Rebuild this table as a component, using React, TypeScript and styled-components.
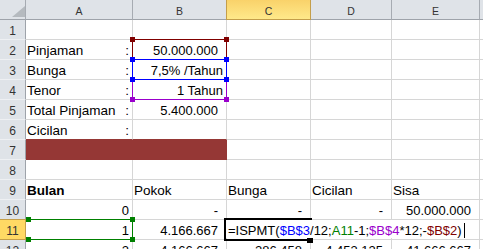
import React from 'react'
import styled, { createGlobalStyle, css } from 'styled-components'

const HEADER_BG = '#dfe3e8'
const HEAD_LINE = '#a6abb2'
const GRID = '#d6d6d6'
const GOLD = '#c49e4a'
const MAROON = '#953735'

const REF_RED = '#800000'
const REF_BLUE = '#0000ff'
const REF_PURPLE = '#9900cc'
const REF_GREEN = '#008000'

const GlobalStyle = createGlobalStyle`
  html, body {
    margin: 0;
    padding: 0;
    background: #fff;
    overflow: hidden;
  }
`

const Sheet = styled.div`
  position: relative;
  width: 483px;
  height: 249px;
  overflow: hidden;
  display: grid;
  grid-template-columns: 26px 107px 94px 84px 81px 88px 1fr;
  grid-auto-rows: 20px;
  font-family: 'Liberation Sans', Arial, sans-serif;
  color: #000;
`

const Corner = styled.div`
  position: relative;
  box-sizing: border-box;
  background: ${HEADER_BG};
  border-right: 1px solid ${HEAD_LINE};
  border-bottom: 1px solid #9ea3aa;

  &::after {
    content: '';
    position: absolute;
    right: 0;
    bottom: 2px;
    width: 0;
    height: 0;
    border-left: 13px solid transparent;
    border-bottom: 11px solid #b5babf;
  }
`

const ColHead = styled.div<{ $active?: boolean }>`
  box-sizing: border-box;
  display: flex;
  align-items: flex-end;
  justify-content: center;
  background: ${HEADER_BG};
  border-right: 1px solid ${HEAD_LINE};
  border-bottom: 1px solid #9ea3aa;
  font-size: 10.5px;
  line-height: 16px;
  color: #333;

  ${({ $active }) =>
    $active &&
    css`
      position: relative;
      z-index: 1;
      margin-left: -1px;
      background: linear-gradient(#f9d26a, #ffe98a);
      border-left: 1px solid ${GOLD};
      border-right-color: ${GOLD};
      border-bottom-color: ${GOLD};
    `}
`

const RowHead = styled.div<{ $active?: boolean }>`
  box-sizing: border-box;
  display: flex;
  align-items: flex-end;
  justify-content: center;
  background: ${HEADER_BG};
  border-right: 1px solid #9ea3aa;
  border-bottom: 1px solid #eef0f3;
  font-size: 12px;
  line-height: 16px;
  color: #333;

  ${({ $active }) =>
    $active &&
    css`
      position: relative;
      z-index: 1;
      margin-top: -1px;
      background: #ffd964;
      border-top: 1px solid ${GOLD};
      border-right-color: ${GOLD};
      border-bottom-color: ${GOLD};
    `}
`

type Align = 'left' | 'right' | 'split'

const Cell = styled.div<{
  $align?: Align
  $pad?: number
  $bold?: boolean
  $size?: number
  $fill?: boolean
  $edge?: boolean
}>`
  box-sizing: border-box;
  display: flex;
  align-items: flex-end;
  justify-content: ${({ $align }) =>
    $align === 'right' ? 'flex-end' : $align === 'split' ? 'space-between' : 'flex-start'};
  padding: 0 ${({ $pad }) => $pad ?? 3}px 0 1px;
  background: ${({ $fill }) => ($fill ? MAROON : '#fff')};
  border-right: 1px solid ${({ $fill }) => ($fill ? MAROON : GRID)};
  border-bottom: 1px solid ${({ $fill, $edge }) => ($fill || $edge ? MAROON : GRID)};
  font-size: ${({ $size }) => $size ?? 13}px;
  font-weight: ${({ $bold }) => ($bold ? 700 : 400)};
  line-height: 16px;
  white-space: nowrap;
`

const RangeFrame = styled.div<{ $x: number; $y: number; $w: number; $h: number; $c: string; $open?: boolean }>`
  position: absolute;
  z-index: 2;
  box-sizing: border-box;
  left: ${({ $x }) => $x}px;
  top: ${({ $y }) => $y}px;
  width: ${({ $w }) => $w}px;
  height: ${({ $h }) => $h}px;
  border: 1px solid ${({ $c }) => $c};
  ${({ $open }) => $open && 'border-left: none;'}
`

const Handle = styled.span<{ $c: string; $pos: 'tl' | 'tr' | 'bl' | 'br'; $open?: boolean }>`
  position: absolute;
  width: 5px;
  height: 5px;
  background: ${({ $c }) => $c};
  ${({ $pos, $open }) =>
    ($pos[0] === 't' ? 'top: -3px;' : 'bottom: -3px;') +
    ($pos[1] === 'l' ? `left: ${$open ? 0 : -3}px;` : 'right: -3px;')}
`

const ActiveBorder = styled.div`
  position: absolute;
  z-index: 3;
  left: 224px;
  top: 218px;
  width: 88px;
  height: 23px;
  box-sizing: border-box;
  border: 2px solid #000;
`

const FillHandle = styled.span`
  position: absolute;
  right: -3px;
  bottom: -4px;
  width: 6px;
  height: 5px;
  background: #000;
`

/* the in-cell editor spills over D11:E11 and hides the active border's right edge */
const EditorBox = styled.div`
  position: absolute;
  z-index: 4;
  left: 226px;
  top: 220px;
  width: 253px;
  height: 18px;
  box-sizing: border-box;
  padding-left: 2px;
  background: #fff;
  display: flex;
  align-items: flex-end;
  font-size: 13px;
  line-height: 16px;
  white-space: nowrap;
  overflow: visible;
`

const Formula = styled.span`
  position: relative;
  top: 1px;
`

const Ref = styled.span<{ $c: string }>`
  color: ${({ $c }) => $c};
`

const Caret = styled.span`
  display: inline-block;
  width: 1px;
  height: 15px;
  margin: 0 0 0 2px;
  background: #000;
`

type CellDef = {
  v?: string
  colon?: boolean
  align?: Align
  acct?: boolean
  bold?: boolean
  label?: boolean
}

type RowDef = { n: number; cells: CellDef[]; fill?: boolean; edge?: boolean; active?: boolean }

const label = (v: string): CellDef => ({ v, colon: true, align: 'split', label: true })
const acct = (v: string): CellDef => ({ v, align: 'right', acct: true })
const num = (v: string): CellDef => ({ v, align: 'right' })
const text = (v: string): CellDef => ({ v, label: true })

const rows: RowDef[] = [
  { n: 1, cells: [] },
  { n: 2, cells: [label('Pinjaman'), acct('50.000.000')] },
  { n: 3, cells: [label('Bunga'), num('7,5% /Tahun')] },
  { n: 4, cells: [label('Tenor'), num('1 Tahun')] },
  { n: 5, cells: [label('Total Pinjaman'), acct('5.400.000')] },
  { n: 6, cells: [label('Cicilan'), {}], edge: true },
  { n: 7, cells: [], fill: true },
  { n: 8, cells: [] },
  {
    n: 9,
    cells: [{ v: 'Bulan', bold: true, label: true }, text('Pokok'), text('Bunga'), text('Cicilan'), text('Sisa')],
  },
  { n: 10, cells: [num('0'), acct('-'), acct('-'), acct('-'), acct('50.000.000')] },
  { n: 11, cells: [num('1'), acct('4.166.667')], active: true },
  { n: 12, cells: [num('2'), acct('4.166.667'), acct('286.458'), acct('4.453.125'), acct('41.666.667')] },
]

const COLUMNS = ['A', 'B', 'C', 'D', 'E', '']

const Range = ({ x, y, w, h, c, open }: { x: number; y: number; w: number; h: number; c: string; open?: boolean }) => (
  <RangeFrame $x={x} $y={y} $w={w} $h={h} $c={c} $open={open}>
    {(['tl', 'tr', 'bl', 'br'] as const).map((p) => (
      <Handle key={p} $c={c} $pos={p} $open={open} />
    ))}
  </RangeFrame>
)

const App = () => (
  <>
    <GlobalStyle />
    <Sheet>
      <Corner />
      {COLUMNS.map((c) => (
        <ColHead key={c || 'F'} $active={c === 'C'}>
          {c}
        </ColHead>
      ))}

      {rows.map((row) => (
        <React.Fragment key={row.n}>
          <RowHead $active={row.active}>{row.n}</RowHead>
          {COLUMNS.map((_, i) => {
            const cell = row.cells[i] || {}
            return (
              <Cell
                key={i}
                $align={cell.align}
                $pad={cell.acct ? 8 : 3}
                $bold={cell.bold}
                $size={cell.label ? 13.5 : 13}
                $fill={row.fill && i < 2}
                $edge={row.edge && i < 2}
              >
                {cell.colon ? (
                  <>
                    <span>{cell.v}</span>
                    <span>:</span>
                  </>
                ) : (
                  cell.v
                )}
              </Cell>
            )
          })}
        </React.Fragment>
      ))}

      <Range x={132} y={39} w={95} h={21} c={REF_RED} />
      <Range x={132} y={79} w={95} h={21} c={REF_PURPLE} />
      <Range x={132} y={59} w={95} h={21} c={REF_BLUE} />
      <Range x={26} y={219} w={107} h={21} c={REF_GREEN} open />

      <ActiveBorder>
        <FillHandle />
      </ActiveBorder>

      <EditorBox>
        <Formula>
          =ISPMT(<Ref $c={REF_BLUE}>$B$3</Ref>/12;<Ref $c={REF_GREEN}>A11</Ref>-1;
          <Ref $c={REF_PURPLE}>$B$4</Ref>*12;-<Ref $c={REF_RED}>$B$2</Ref>)
        </Formula>
        <Caret />
      </EditorBox>
    </Sheet>
  </>
)

export default App
